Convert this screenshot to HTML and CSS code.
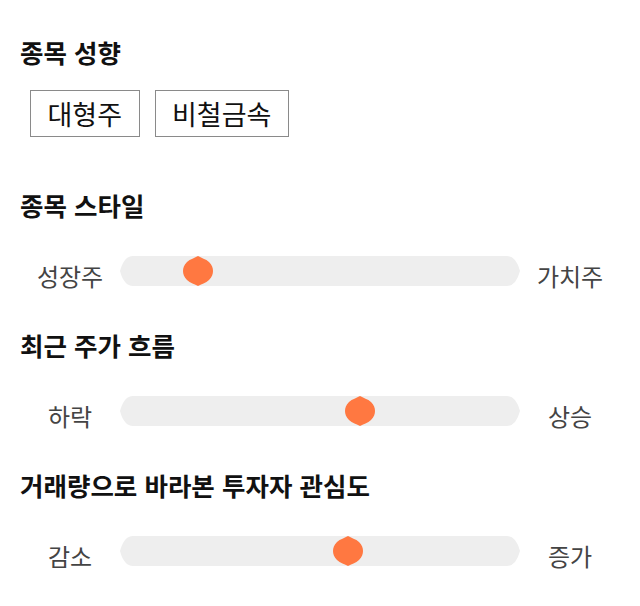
FILE: index.html
```html
<!DOCTYPE html>
<html lang="ko">
<head>
<meta charset="utf-8">
<link rel="stylesheet" href="styles.css">
</head>
<body>
<main class="page">
  <section class="section section-tags">
    <h2 class="title">종목 성향</h2>
    <div class="tags">
      <span class="tag">대형주</span>
      <span class="tag">비철금속</span>
    </div>
  </section>

  <section class="section">
    <h2 class="title">종목 스타일</h2>
    <div class="slider-row">
      <span class="label">성장주</span>
      <div class="track">
        <svg class="track-bg" width="400" height="30" viewBox="0 0 400 30"><path d="M13 0 H387 Q396 0 400 15 Q396 30 387 30 H13 Q4 30 0 15 Q4 0 13 0Z" fill="#eeeeee"/></svg>
        <svg class="thumb" style="left: 19.5%" width="30" height="30" viewBox="0 0 30 30"><path d="M15 0 C18 2 23 3 26 6 C29 9 30 12 30 15 C30 18 29 21 26 24 C23 27 18 28 15 30 C12 28 7 27 4 24 C1 21 0 18 0 15 C0 12 1 9 4 6 C7 3 12 2 15 0Z" fill="#ff7841"/></svg>
      </div>
      <span class="label">가치주</span>
    </div>
  </section>

  <section class="section">
    <h2 class="title">최근 주가 흐름</h2>
    <div class="slider-row">
      <span class="label">하락</span>
      <div class="track">
        <svg class="track-bg" width="400" height="30" viewBox="0 0 400 30"><path d="M13 0 H387 Q396 0 400 15 Q396 30 387 30 H13 Q4 30 0 15 Q4 0 13 0Z" fill="#eeeeee"/></svg>
        <svg class="thumb" style="left: 60%" width="30" height="30" viewBox="0 0 30 30"><path d="M15 0 C18 2 23 3 26 6 C29 9 30 12 30 15 C30 18 29 21 26 24 C23 27 18 28 15 30 C12 28 7 27 4 24 C1 21 0 18 0 15 C0 12 1 9 4 6 C7 3 12 2 15 0Z" fill="#ff7841"/></svg>
      </div>
      <span class="label">상승</span>
    </div>
  </section>

  <section class="section">
    <h2 class="title">거래량으로 바라본 투자자 관심도</h2>
    <div class="slider-row">
      <span class="label">감소</span>
      <div class="track">
        <svg class="track-bg" width="400" height="30" viewBox="0 0 400 30"><path d="M13 0 H387 Q396 0 400 15 Q396 30 387 30 H13 Q4 30 0 15 Q4 0 13 0Z" fill="#eeeeee"/></svg>
        <svg class="thumb" style="left: 57%" width="30" height="30" viewBox="0 0 30 30"><path d="M15 0 C18 2 23 3 26 6 C29 9 30 12 30 15 C30 18 29 21 26 24 C23 27 18 28 15 30 C12 28 7 27 4 24 C1 21 0 18 0 15 C0 12 1 9 4 6 C7 3 12 2 15 0Z" fill="#ff7841"/></svg>
      </div>
      <span class="label">증가</span>
    </div>
  </section>
</main>
</body>
</html>
```

FILE: styles.css
```css
* { box-sizing: border-box; }
html, body {
  margin: 0;
  padding: 0;
  background: #ffffff;
}
body {
  font-family: "Noto Sans CJK KR", "Noto Sans", sans-serif;
  color: #000;
}
.page {
  padding: 37px 20px 30px 20px;
  display: flex;
  flex-direction: column;
  gap: 35px;
}
.section {
  display: flex;
  flex-direction: column;
  gap: 36px;
}
.section-tags {
  gap: 23px;
  margin-bottom: 18px;
}
.title {
  margin: 0;
  font-size: 25.5px;
  line-height: 30px;
  font-weight: 700;
  color: #111;
}
.tags {
  display: flex;
  gap: 15px;
  padding-left: 10px;
}
.tag {
  height: 47px;
  display: flex;
  align-items: center;
  justify-content: center;
  padding: 0 16.5px;
  border: 1px solid #8a8a8a;
  font-size: 27px;
  color: #111;
}
.slider-row {
  display: flex;
  align-items: flex-start;
}
.label {
  width: 100px;
  text-align: center;
  font-size: 24px;
  color: #444;
  line-height: 30px;
  padding-top: 5px;
  height: 39px;
}
.track {
  position: relative;
  width: 400px;
  height: 30px;
}
.track-bg {
  display: block;
}
.thumb {
  position: absolute;
  top: 0;
  margin-left: -15px;
  display: block;
}
```
